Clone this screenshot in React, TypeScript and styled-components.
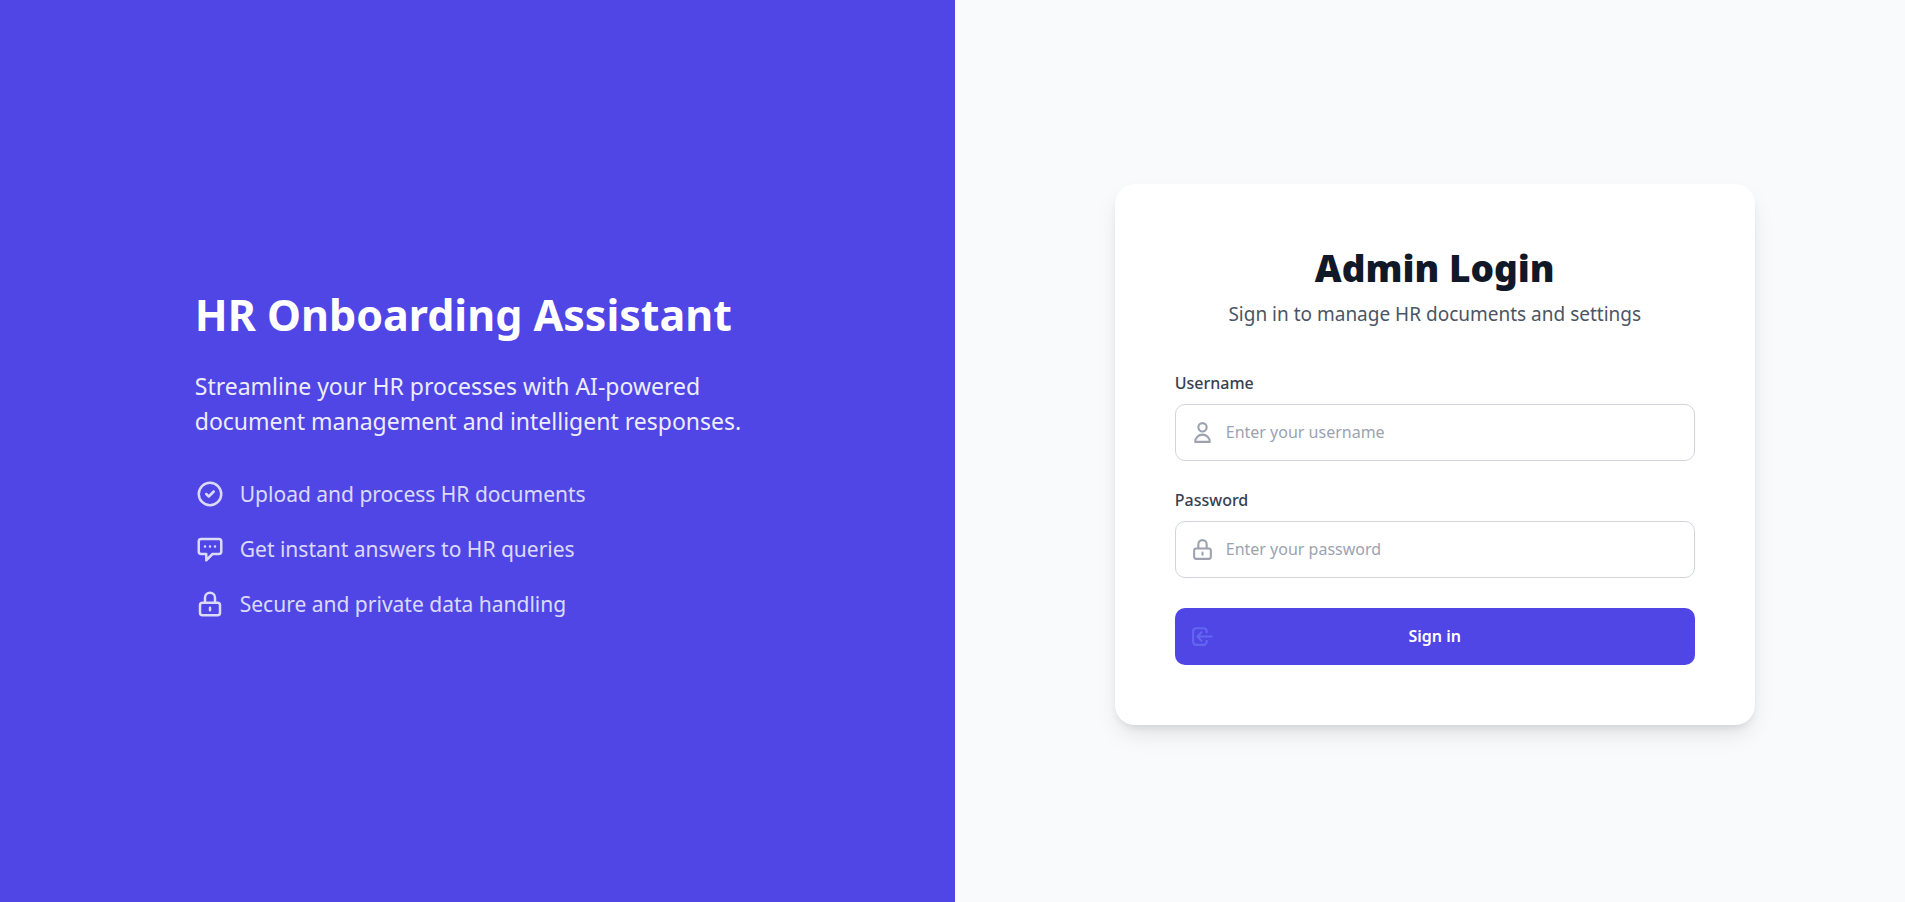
import React from 'react';
import styled, { createGlobalStyle } from 'styled-components';

const GlobalStyle = createGlobalStyle`
  *, *::before, *::after { box-sizing: border-box; }
  body {
    margin: 0;
    font-family: "Noto Sans", "Open Sans", sans-serif;
    background: #f9fafb;
  }
  h1, h2, p, ul { margin: 0; padding: 0; }
`;

const Page = styled.main`
  display: grid;
  grid-template-columns: calc(50% + 2px) 1fr;
  min-height: 100vh;
`;

const BrandPanel = styled.section`
  display: flex;
  align-items: center;
  justify-content: center;
  background: #4f46e5;
`;

const BrandContent = styled.div`
  width: 100%;
  max-width: 565px;
`;

const BrandTitle = styled.h1`
  margin-bottom: 20px;
  font-size: 43px;
  line-height: 68px;
  font-weight: 700;
  color: #ffffff;
`;

const Tagline = styled.p`
  margin-bottom: 38px;
  font-size: 23px;
  line-height: 35px;
  color: #ffffff;
  opacity: 0.9;
`;

const FeatureList = styled.ul`
  display: flex;
  flex-direction: column;
  gap: 20px;
  list-style: none;
`;

const Feature = styled.li`
  display: flex;
  align-items: center;
  gap: 15px;
  font-size: 21px;
  line-height: 35px;
  color: #ffffff;
  opacity: 0.8;
`;

const FormPanel = styled.section`
  display: flex;
  align-items: center;
  justify-content: center;
  padding: 6px 0 0 10px;
`;

const Card = styled.form`
  width: 100%;
  max-width: 640px;
  padding: 60px;
  border-radius: 20px;
  background: #ffffff;
  box-shadow: 0 12px 24px -4px rgba(0, 0, 0, 0.1), 0 5px 8px -3px rgba(0, 0, 0, 0.1);
`;

const CardHeader = styled.header`
  display: flex;
  flex-direction: column;
  gap: 8px;
  margin-bottom: 46px;
  text-align: center;
`;

const CardTitle = styled.h2`
  font-size: 37px;
  line-height: 48px;
  font-weight: 900;
  color: #111827;
`;

const CardSubtitle = styled.p`
  font-size: 19px;
  line-height: 28px;
  color: #4b5563;
`;

const Field = styled.div`
  display: flex;
  flex-direction: column;
  gap: 12px;
  margin-bottom: 30px;
`;

const Label = styled.label`
  font-size: 16px;
  line-height: 18px;
  font-weight: 500;
  color: #374151;
`;

const Control = styled.div`
  position: relative;
  display: flex;
  align-items: center;
`;

const Input = styled.input`
  width: 100%;
  height: 57px;
  padding: 0 16px 0 50px;
  border: 1px solid #d1d5db;
  border-radius: 10px;
  background: #ffffff;
  font: inherit;
  font-size: 16px;
  color: #111827;
  &::placeholder { color: #9ca3af; opacity: 1; }
  &:focus { outline: 2px solid #6366f1; }
`;

const SubmitButton = styled.button`
  width: 100%;
  height: 57px;
  border: 0;
  border-radius: 10px;
  background: #4f46e5;
  font: inherit;
  font-size: 16px;
  font-weight: 600;
  color: #ffffff;
  cursor: pointer;
  &:hover { background: #4338ca; }
`;

const Icon = styled.svg<{ $size: number }>`
  flex: none;
  width: ${({ $size }) => $size}px;
  height: ${({ $size }) => $size}px;
  fill: none;
  stroke: currentColor;
  stroke-width: 2;
  stroke-linecap: round;
  stroke-linejoin: round;
`;

const InsetIcon = styled(Icon)<{ $color: string }>`
  position: absolute;
  left: 15px;
  color: ${({ $color }) => $color};
  pointer-events: none;
`;

const paths = {
  check: 'M9 12l2 2 4-4m6 2a9 9 0 11-18 0 9 9 0 0118 0z',
  chat: 'M8 10h.01M12 10h.01M16 10h.01M9 16H5a2 2 0 01-2-2V6a2 2 0 012-2h14a2 2 0 012 2v8a2 2 0 01-2 2h-5l-5 5v-5z',
  lock: 'M12 15v2m-6 4h12a2 2 0 002-2v-6a2 2 0 00-2-2H6a2 2 0 00-2 2v6a2 2 0 002 2zm10-10V7a4 4 0 00-8 0v4h8z',
  user: 'M16 7a4 4 0 11-8 0 4 4 0 018 0zM12 14a7 7 0 00-7 7h14a7 7 0 00-7-7z',
  signIn: 'M11 16l-4-4m0 0l4-4m-4 4h14m-5 4v1a3 3 0 01-3 3H6a3 3 0 01-3-3V7a3 3 0 013-3h7a3 3 0 013 3v1',
};

const features = [
  { icon: paths.check, text: 'Upload and process HR documents' },
  { icon: paths.chat, text: 'Get instant answers to HR queries' },
  { icon: paths.lock, text: 'Secure and private data handling' },
];

const fields = [
  { id: 'username', label: 'Username', type: 'text', icon: paths.user, placeholder: 'Enter your username' },
  { id: 'password', label: 'Password', type: 'password', icon: paths.lock, placeholder: 'Enter your password' },
];

export default function App() {
  return (
    <>
      <GlobalStyle />
      <Page>
        <BrandPanel>
          <BrandContent>
            <BrandTitle>HR Onboarding Assistant</BrandTitle>
            <Tagline>Streamline your HR processes with AI-powered document management and intelligent responses.</Tagline>
            <FeatureList>
              {features.map(({ icon, text }) => (
                <Feature key={text}>
                  <Icon $size={30} viewBox="0 0 24 24" aria-hidden="true"><path d={icon} /></Icon>
                  <span>{text}</span>
                </Feature>
              ))}
            </FeatureList>
          </BrandContent>
        </BrandPanel>
        <FormPanel>
          <Card onSubmit={(event) => event.preventDefault()}>
            <CardHeader>
              <CardTitle>Admin Login</CardTitle>
              <CardSubtitle>Sign in to manage HR documents and settings</CardSubtitle>
            </CardHeader>
            {fields.map(({ id, label, type, icon, placeholder }) => (
              <Field key={id}>
                <Label htmlFor={id}>{label}</Label>
                <Control>
                  <Input id={id} name={id} type={type} placeholder={placeholder} />
                  <InsetIcon $size={25} $color="#9ca3af" viewBox="0 0 24 24" aria-hidden="true"><path d={icon} /></InsetIcon>
                </Control>
              </Field>
            ))}
            <Control>
              <SubmitButton type="submit">Sign in</SubmitButton>
              <InsetIcon $size={25} $color="#6366f1" viewBox="0 0 24 24" aria-hidden="true"><path d={paths.signIn} /></InsetIcon>
            </Control>
          </Card>
        </FormPanel>
      </Page>
    </>
  );
}
